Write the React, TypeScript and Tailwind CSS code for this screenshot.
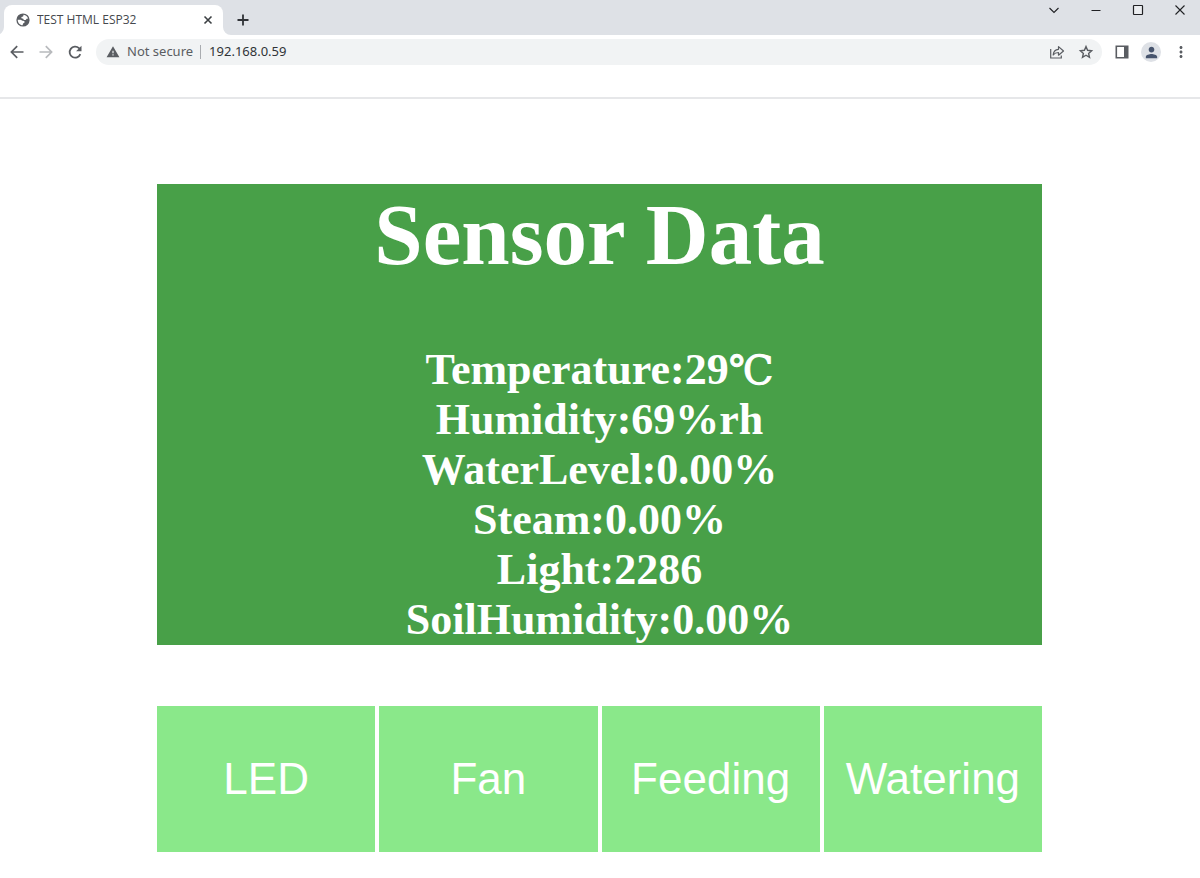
import type { ReactNode } from "react";
import { MdMoreVert, MdPerson, MdWarning } from "react-icons/md";

const readings = [
  { label: "Temperature", value: "29", unit: "℃" },
  { label: "Humidity", value: "69%rh" },
  { label: "WaterLevel", value: "0.00%" },
  { label: "Steam", value: "0.00%" },
  { label: "Light", value: "2286" },
  { label: "SoilHumidity", value: "0.00%" },
];

const actions = ["LED", "Fan", "Feeding", "Watering"];

function IconButton({ label, className = "", children }: { label: string; className?: string; children: ReactNode }) {
  return (
    <button type="button" aria-label={label} className={`flex shrink-0 items-center justify-center ${className}`}>
      {children}
    </button>
  );
}

function TabStrip() {
  return (
    <div className="flex h-[35px] items-start bg-[#dee1e6] pl-1">
      <div className="relative mt-[5px] flex h-[30px] w-[219px] items-center rounded-t-lg bg-white pr-2 pl-3">
        <svg viewBox="0 0 14 14" className="size-3.5 shrink-0">
          <circle cx="7" cy="7" r="6.6" fill="#5a5d62" />
          <path
            d="M7.600 1.700C9.800 2 11.600 3.600 12.100 5.600l-1.500.1-.9 1.200H7.900L7.200 5.700 5.400 5.300V4l1.700-.5z"
            fill="white"
          />
          <path
            d="M1.700 6.700h2.900l1.900 1.100 1.800.3.300 1.300-1.500 1-.5 1.800C4 12.200 1.800 9.900 1.700 6.700z"
            fill="white"
          />
        </svg>
        <span className="ml-[7px] flex-1 truncate text-[12px] text-[#45484d] font-['Open_Sans','Noto_Sans',sans-serif]">
          TEST HTML ESP32
        </span>
        <IconButton label="Close tab" className="size-3.5 text-[#3c4043]">
          <svg viewBox="0 0 14 14" className="size-3.5" fill="none" stroke="currentColor" strokeWidth="1.6">
            <path d="M3.5 3.5l7 7M10.5 3.5l-7 7" />
          </svg>
        </IconButton>
        <svg viewBox="0 0 8 8" className="absolute bottom-0 -left-2 size-2" fill="white">
          <path d="M8 0v8H0a8 8 0 0 0 8-8z" />
        </svg>
        <svg viewBox="0 0 8 8" className="absolute -right-2 bottom-0 size-2" fill="white">
          <path d="M0 0v8h8a8 8 0 0 1-8-8z" />
        </svg>
      </div>
      <IconButton label="New tab" className="mt-2.5 ml-2.5 size-5 text-[#303337]">
        <svg viewBox="0 0 20 20" className="size-5" fill="none" stroke="currentColor" strokeWidth="1.8">
          <path d="M10 4.5v11M4.5 10h11" />
        </svg>
      </IconButton>
      <div className="ml-auto flex text-[#202124]">
        <IconButton label="Search tabs" className="h-5 w-[42px]">
          <svg viewBox="0 0 12 12" className="size-3" fill="none" stroke="currentColor" strokeWidth="1.1">
            <path d="M1.5 4L6 8.5 10.5 4" />
          </svg>
        </IconButton>
        <IconButton label="Minimize" className="h-5 w-[42px]">
          <svg viewBox="0 0 12 12" className="size-3" fill="none" stroke="currentColor">
            <path d="M1.5 6.5h9" />
          </svg>
        </IconButton>
        <IconButton label="Maximize" className="h-5 w-[42px]">
          <svg viewBox="0 0 12 12" className="size-3" fill="#ebedf0" stroke="currentColor" strokeWidth="1.2">
            <rect x="1.5" y="1.5" width="9" height="9" rx="0.5" />
          </svg>
        </IconButton>
        <IconButton label="Close" className="h-5 w-[41px]">
          <svg viewBox="0 0 12 12" className="size-3" fill="none" stroke="currentColor" strokeWidth="1.1">
            <path d="M1.5 1.5l9 9M10.5 1.5l-9 9" />
          </svg>
        </IconButton>
      </div>
    </div>
  );
}

function Toolbar() {
  return (
    <div className="flex h-[34px] items-center pr-2.5 pl-2 text-[#5a5d62]">
      <IconButton label="Back" className="size-[18px]">
        <svg viewBox="0 0 18 18" className="size-[18px]" fill="none" stroke="currentColor" strokeWidth="1.7">
          <path d="M15.500 9H3.500M9.200 3.200L3.400 9l5.800 5.800" />
        </svg>
      </IconButton>
      <IconButton label="Forward" className="ml-[11px] size-[18px] text-[#b8babd]">
        <svg viewBox="0 0 18 18" className="size-[18px]" fill="none" stroke="currentColor" strokeWidth="1.7">
          <path d="M2.500 9h12M8.800 3.200L14.600 9l-5.800 5.800" />
        </svg>
      </IconButton>
      <IconButton label="Reload" className="ml-[11px] size-[18px]">
        <svg viewBox="0 0 18 18" className="size-[18px]" fill="none" stroke="currentColor" strokeWidth="1.8">
          <path d="M14.300 11.100A5.500 5.500 0 1 1 13 5.200l1 1" />
          <path d="M15.500 2.800v5.400h-5.400z" fill="currentColor" stroke="none" />
        </svg>
      </IconButton>
      <div className="ml-3 flex h-[26px] flex-1 items-center rounded-full bg-[#f1f3f4] pr-2 pl-2.5">
        <MdWarning className="size-3.5 shrink-0" />
        <span className="ml-[7px] text-[13px] whitespace-nowrap">Not secure</span>
        <span className="mr-2 ml-[7px] h-3.5 w-px bg-[#a9acb0]" />
        <input
          aria-label="Address"
          defaultValue="192.168.0.59"
          className="min-w-0 flex-1 bg-transparent text-[13px] text-[#303337] outline-none"
        />
        <IconButton label="Share" className="size-4">
          <svg viewBox="0 0 16 16" className="size-4" fill="none" stroke="currentColor" strokeWidth="1.2">
            <path d="M1.700 5v9h10.600v-2.500" />
            <path d="M4.200 11c.2-3.600 2-5.500 5.300-5.700V2.600l5 4.400-5 4.200V8.500c-2.300 0-4 .7-5.300 2.500z" strokeLinejoin="round" />
          </svg>
        </IconButton>
        <IconButton label="Bookmark" className="ml-[13px] size-4">
          <svg viewBox="0 0 16 16" className="size-4" fill="none" stroke="currentColor" strokeWidth="1.4">
            <path d="M8 2.600l1.600 3.700 4 .4-3 2.700.9 3.900L8 11.200l-3.500 2.100.9-3.900-3-2.700 4-.4z" />
          </svg>
        </IconButton>
      </div>
      <IconButton label="Side panel" className="ml-[13px] size-3.5">
        <svg viewBox="0 0 14 14" className="size-3.5" fill="none" stroke="currentColor" strokeWidth="1.6">
          <path d="M1.300 1.300h11.400v11.400H1.300z" />
          <path d="M9 1h4v12H9z" fill="currentColor" stroke="none" />
        </svg>
      </IconButton>
      <IconButton label="Profile" className="ml-3 size-5 rounded-full bg-[#dee1e6] text-[#47546d]">
        <MdPerson className="size-[17px]" />
      </IconButton>
      <IconButton label="Menu" className="ml-[11px] size-[18px]">
        <MdMoreVert className="size-[18px]" />
      </IconButton>
    </div>
  );
}

export default function App() {
  return (
    <div className="min-h-screen bg-white">
      <header className="border-b-2 border-[#e6e7e9] pb-7 font-['Noto_Sans','Open_Sans',sans-serif]">
        <TabStrip />
        <Toolbar />
      </header>
      <main className="pt-[85px] pr-[158px] pb-6 pl-[157px]">
        <section className="bg-[#48a048] text-center font-['Liberation_Serif',serif] font-bold text-white">
          <h1 className="text-[87px] leading-[102px]">Sensor Data</h1>
          <div className="pt-[59px] text-[44px] leading-[50px]">
            {readings.map((reading) => (
              <p key={reading.label}>
                {reading.label}:{reading.value}
                {reading.unit && (
                  <span className="font-['DejaVu_Serif',serif] text-[40px] leading-none font-normal [-webkit-text-stroke:1px_white]">
                    {reading.unit}
                  </span>
                )}
              </p>
            ))}
          </div>
        </section>
        <div className="mt-[61px] grid grid-cols-4 gap-1 font-['Liberation_Sans',Arial,sans-serif]">
          {actions.map((action) => (
            <button key={action} type="button" className="h-[146px] bg-[#8ae88a] text-[44px] text-white">
              {action}
            </button>
          ))}
        </div>
      </main>
    </div>
  );
}
